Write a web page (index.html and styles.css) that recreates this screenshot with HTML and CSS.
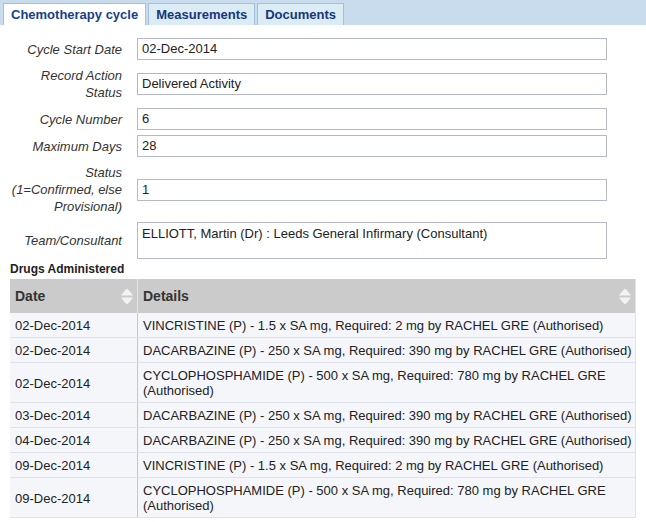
FILE: index.html
```html
<!DOCTYPE html>
<html>
<head>
<meta charset="utf-8">
<link rel="stylesheet" href="styles.css">
</head>
<body>
<div class="tabbar">
  <div class="tab active">Chemotherapy cycle</div>
  <div class="tab">Measurements</div>
  <div class="tab">Documents</div>
</div>
<div class="panel">
  <div class="form">
    <div class="row"><div class="lbl">Cycle Start Date</div><div class="field">02-Dec-2014</div></div>
    <div class="row"><div class="lbl">Record Action Status</div><div class="field">Delivered Activity</div></div>
    <div class="row"><div class="lbl">Cycle Number</div><div class="field">6</div></div>
    <div class="row"><div class="lbl">Maximum Days</div><div class="field">28</div></div>
    <div class="row"><div class="lbl">Status (1=Confirmed, else Provisional)</div><div class="field">1</div></div>
    <div class="row"><div class="lbl">Team/Consultant</div><div class="field area">ELLIOTT, Martin (Dr) : Leeds General Infirmary (Consultant)</div></div>
  </div>
  <div class="section-title">Drugs Administered</div>
  <table class="grid">
    <thead>
      <tr>
        <th class="c-date"><div class="th-in"><span>Date</span><svg class="sort" viewBox="0 0 12 17" width="12" height="17"><path d="M6 0.5 C8 2.5 10.5 5 12 7.5 H0 C1.5 5 4 2.5 6 0.5 Z" fill="#f3f3f3"/><path d="M0 9.5 H12 C10.5 12 8 14.5 6 16.5 C4 14.5 1.5 12 0 9.5 Z" fill="#f3f3f3"/></svg></div></th>
        <th><div class="th-in"><span>Details</span><svg class="sort" viewBox="0 0 12 17" width="12" height="17"><path d="M6 0.5 C8 2.5 10.5 5 12 7.5 H0 C1.5 5 4 2.5 6 0.5 Z" fill="#f3f3f3"/><path d="M0 9.5 H12 C10.5 12 8 14.5 6 16.5 C4 14.5 1.5 12 0 9.5 Z" fill="#f3f3f3"/></svg></div></th>
      </tr>
    </thead>
    <tbody>
      <tr><td>02-Dec-2014</td><td>VINCRISTINE (P) - 1.5 x SA mg, Required: 2 mg by RACHEL GRE (Authorised)</td></tr>
      <tr><td>02-Dec-2014</td><td>DACARBAZINE (P) - 250 x SA mg, Required: 390 mg by RACHEL GRE (Authorised)</td></tr>
      <tr><td>02-Dec-2014</td><td>CYCLOPHOSPHAMIDE (P) - 500 x SA mg, Required: 780 mg by RACHEL GRE (Authorised)</td></tr>
      <tr><td>03-Dec-2014</td><td>DACARBAZINE (P) - 250 x SA mg, Required: 390 mg by RACHEL GRE (Authorised)</td></tr>
      <tr><td>04-Dec-2014</td><td>DACARBAZINE (P) - 250 x SA mg, Required: 390 mg by RACHEL GRE (Authorised)</td></tr>
      <tr><td>09-Dec-2014</td><td>VINCRISTINE (P) - 1.5 x SA mg, Required: 2 mg by RACHEL GRE (Authorised)</td></tr>
      <tr><td>09-Dec-2014</td><td>CYCLOPHOSPHAMIDE (P) - 500 x SA mg, Required: 780 mg by RACHEL GRE (Authorised)</td></tr>
    </tbody>
  </table>
</div>
</body>
</html>
```
FILE: styles.css
```css
html, body {
  margin: 0;
  padding: 0;
  background: #ffffff;
}
body {
  font-family: "Liberation Sans", Arial, sans-serif;
  font-size: 13px;
  color: #222;
}
.tabbar {
  display: flex;
  align-items: flex-end;
  height: 25px;
  box-sizing: border-box;
  padding-left: 3px;
  background: #c9dcee;
}
.tab {
  height: 22px;
  box-sizing: border-box;
  padding: 1px 7px 0 7px;
  margin-right: 2px;
  border: 1px solid #a3c0e3;
  border-bottom: none;
  background: #dbecf5;
  color: #15367f;
  font-weight: bold;
  font-size: 13px;
  line-height: 20px;
}
.tab.active {
  background: #ffffff;
  color: #153f8f;
}
.panel {
  padding: 0 10px 0 10px;
}
.form {
  display: flex;
  flex-direction: column;
  gap: 5px;
  padding-top: 13px;
}
.row {
  display: flex;
  align-items: center;
}
.lbl {
  width: 112px;
  margin-right: 15px;
  padding: 2px 0;
  text-align: right;
  font-style: italic;
  color: #333;
  line-height: 17px;
}
.field {
  width: 470px;
  height: 22px;
  box-sizing: border-box;
  border: 1px solid #b5b8c8;
  padding: 0 4px;
  line-height: 20px;
  color: #222;
  background: #fff;
}
.field.area {
  height: 37px;
  padding: 3px 4px;
  line-height: 15px;
  align-self: center;
}
.section-title {
  margin-top: 3px;
  font-weight: bold;
  font-size: 12px;
  line-height: 15px;
  color: #222;
}
.grid {
  margin-top: 2px;
  width: 626px;
  border-collapse: collapse;
  table-layout: fixed;
  border-right: 1px solid #dfe2ea;
}
.grid th {
  background: #cbcbcb;
  padding: 0;
  height: 34px;
  text-align: left;
  font-weight: bold;
  font-size: 14px;
  color: #333;
}
.grid th.c-date {
  width: 127px;
  border-right: 1px solid #e4e4e4;
}
.th-in {
  display: flex;
  align-items: center;
  justify-content: space-between;
  padding: 0 4px 0 5px;
}
.sort {
  display: block;
}
.grid td {
  background: #f5f6fa;
  padding: 5px 0 4px 5px;
  line-height: 15px;
  color: #222;
  border-bottom: 1px solid #dfe2ea;
  vertical-align: middle;
}
.grid td:first-child {
  border-right: 1px solid #c3c6d6;
}
```
